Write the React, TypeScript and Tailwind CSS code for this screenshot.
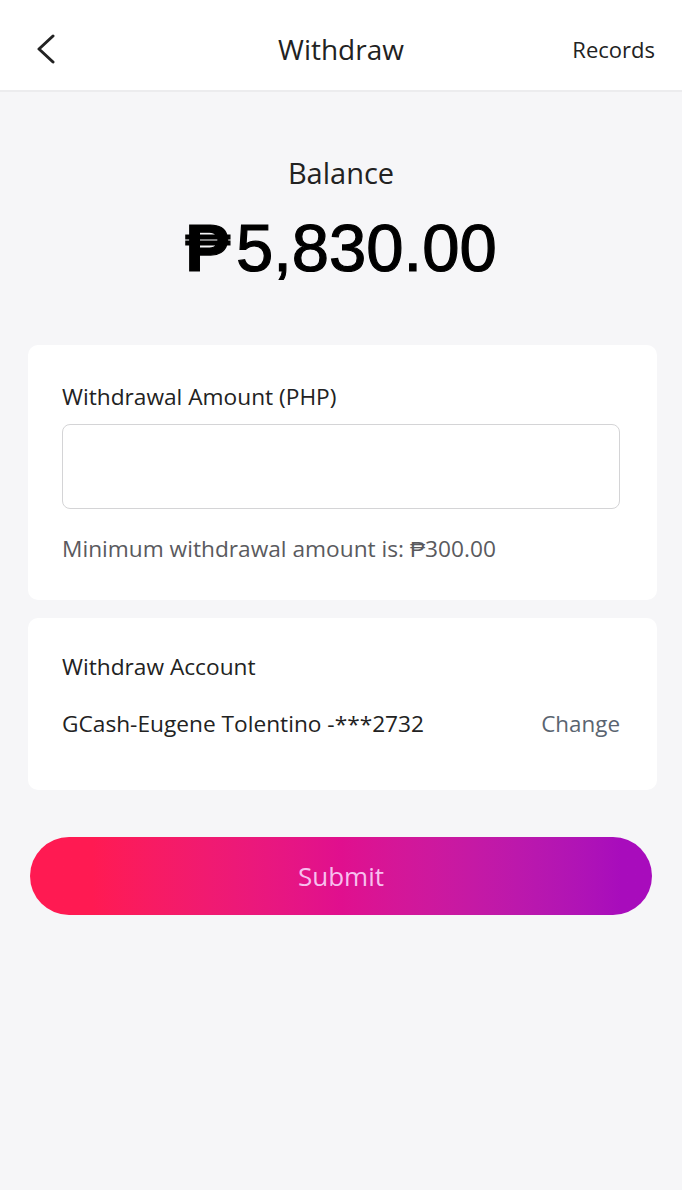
export default function App() {
  return (
    <div className="min-h-[1190px] w-[682px] bg-[#f6f6f8] font-['Open_Sans',sans-serif] text-[#222]">
      {/* Header */}
      <header className="grid h-[92px] grid-cols-[1fr_auto_1fr] items-center border-b-2 border-[#ececee] bg-white px-[27px] pt-[8px]">
        <svg width="20" height="30" viewBox="0 0 20 30" className="ml-[9px] justify-self-start" aria-hidden="true">
          <polyline points="17,2 3,15 17,28" fill="none" stroke="#222" strokeWidth="3" strokeLinecap="round" strokeLinejoin="round" />
        </svg>
        <h1 className="text-[28px] leading-[36px] text-[#222]">Withdraw</h1>
        <span className="justify-self-end text-[22px] leading-[30px] text-[#222]">Records</span>
      </header>

      {/* Balance */}
      <section className="flex flex-col items-center pt-[61px]">
        <p className="text-[29px] leading-[40px] text-[#222]">Balance</p>
        <p className="mt-[17px] font-['Liberation_Sans',Arial,sans-serif] text-[67px] leading-[76px] text-black [-webkit-text-stroke:1.2px_black]">
          <span className="mr-[6px] font-bold">₱</span>5,830.00
        </p>
      </section>

      {/* Amount card */}
      <div className="ml-[28px] mr-[25px] mt-[59px] rounded-[10px] bg-white pb-[35px] pl-[34px] pr-[37px] pt-[36px]">
        <p className="text-[22.7px] leading-[32px] text-[#222]">Withdrawal Amount (PHP)</p>
        <input
          className="mt-[11px] h-[85px] w-full rounded-[8px] border border-[#d4d4d6] bg-white px-4 text-[22px] outline-none"
          type="text"
        />
        <p className="mt-[24px] text-[22.7px] leading-[32px] text-[#5a5a5e]">
          Minimum withdrawal amount is: ₱300.00
        </p>
      </div>

      {/* Account card */}
      <div className="ml-[28px] mr-[25px] mt-[18px] rounded-[10px] bg-white pb-[50px] pl-[34px] pr-[37px] pt-[33px]">
        <p className="text-[22.7px] leading-[32px] text-[#222]">Withdraw Account</p>
        <div className="mt-[25px] flex items-center justify-between">
          <span className="text-[22.7px] leading-[32px] text-[#222]">GCash-Eugene Tolentino -***2732</span>
          <button className="text-[22.4px] leading-[32px] text-[#5a6470]">Change</button>
        </div>
      </div>

      {/* Submit */}
      <div className="mt-[47px] px-[30px]">
        <button className="h-[78px] w-full rounded-full bg-gradient-to-r from-[#ff1a52] from-10% via-[#e00f8e] to-[#a80cbc] to-95% text-[26px] text-[#f7bfee]">
          Submit
        </button>
      </div>
    </div>
  );
}
